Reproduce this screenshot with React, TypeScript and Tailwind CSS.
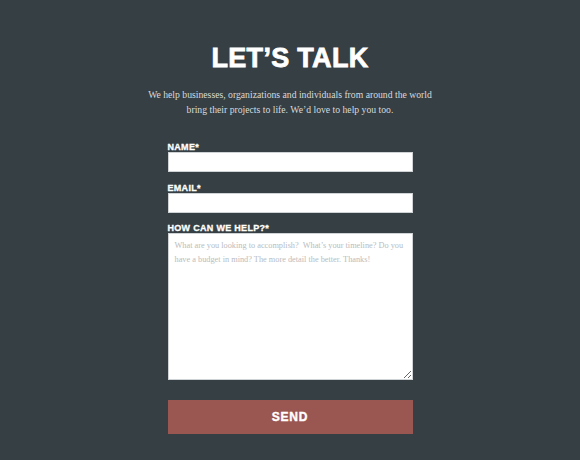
import React from "react";

const label = "h-[10px] text-[9px] leading-[10px] font-bold text-white font-['Liberation_Sans',sans-serif] tracking-[0.3px] [-webkit-text-stroke:0.3px_white]";
const field = "h-[20px] bg-white border border-[#cfd3d5] outline-none";

export default function App() {
  return (
    <div className="w-[580px] h-[460px] bg-[#363f44] flex flex-col items-center">
      <h1 className="mt-[43px] text-[27px] leading-[30px] font-bold text-white tracking-[0.3px] font-['Liberation_Sans',sans-serif] [-webkit-text-stroke:0.8px_white]">
        LET’S TALK
      </h1>
      <p className="mt-[14px] text-[9.7px] leading-[15px] text-[#d6dadc] text-center whitespace-nowrap font-['Liberation_Serif',serif]">
        We help businesses, organizations and individuals from around the world
        <br />
        bring their projects to life. We’d love to help you too.
      </p>
      <form className="mt-[25px] w-[245px] flex flex-col">
        <div className={label}>NAME*</div>
        <input className={field} />
        <div className={`${label} mt-[11px]`}>EMAIL*</div>
        <input className={field} />
        <div className={`${label} mt-[10px]`}>HOW CAN WE HELP?*</div>
        <textarea
          className="h-[147px] bg-white border border-[#cfd3d5] px-[6px] py-[5px] text-[8.3px] leading-[14px] text-[#333] placeholder:text-[#b9bcbe] outline-none font-['Liberation_Serif',serif]"
          placeholder="What are you looking to accomplish?  What’s your timeline? Do you have a budget in mind? The more detail the better. Thanks!"
        />
        <button
          type="button"
          className="mt-[20px] h-[34px] bg-[#9a5650] text-white text-[12px] font-bold tracking-[0.8px] font-['Liberation_Sans',sans-serif] [-webkit-text-stroke:0.4px_white]"
        >
          SEND
        </button>
      </form>
    </div>
  );
}
